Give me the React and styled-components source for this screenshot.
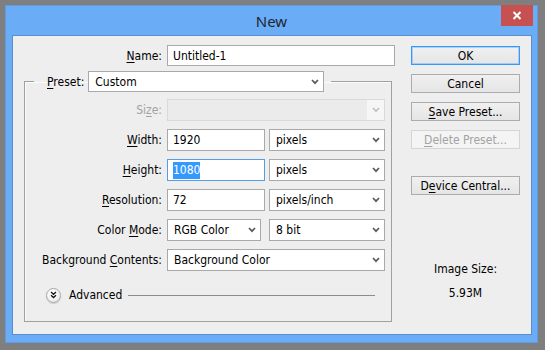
import React from "react";
import styled, { createGlobalStyle } from "styled-components";

const Global = createGlobalStyle`
  html, body { margin: 0; padding: 0; }
  body {
    background: #7f7f7f;
    font-family: "DejaVu Sans Condensed", "DejaVu Sans", sans-serif;
    font-size: 12px;
    color: #000;
  }
  * { box-sizing: border-box; }
`;

const Window = styled.div`
  width: 533px;
  height: 338px;
  margin: 5px;
  border: 1px solid #5d9be2;
  background: #6aacf6;
  display: flex;
  flex-direction: column;
`;

const TitleBar = styled.div`
  height: 29px;
  display: grid;
  grid-template-columns: 1fr auto 1fr;
`;

const Title = styled.div`
  grid-column: 2;
  align-self: center;
  font-family: "Noto Sans", "Open Sans", sans-serif;
  font-size: 15px;
  color: #1e2630;
  padding-top: 1px;
`;

const CloseButton = styled.div`
  grid-column: 3;
  justify-self: end;
  align-self: start;
  width: 32px;
  height: 21px;
  margin-top: -1px;
  margin-right: 4px;
  background: #c75050;
  display: flex;
  align-items: center;
  justify-content: center;
`;

const Client = styled.div`
  flex: 1;
  margin: 0 5px 7px 6px;
  border: 1px solid #5b8fcc;
  background: #eeeeee;
  display: flex;
`;

const Main = styled.div`
  width: 382px;
  padding-top: 9px;
  display: flex;
  flex-direction: column;
`;

const NameRow = styled.div`
  display: grid;
  grid-template-columns: 149px 228px;
  column-gap: 5px;
  height: 21px;
`;

const Label = styled.div`
  display: flex;
  align-items: center;
  justify-content: flex-end;
  white-space: nowrap;
  color: ${(p) => (p.$disabled ? "#a3a3a3" : "#000")};
  u { text-underline-offset: 2px; }
`;

const Group = styled.fieldset`
  margin: 5px 0 0 11px;
  width: 368px;
  padding: 0 6px 0 0;
  border: 1px solid #a0a0a0;
  box-shadow: inset 1px 1px 0 #fbfbfb;
  min-width: 0;
`;

const Legend = styled.legend`
  margin-left: 9px;
  padding: 0 7px 0 13px;
`;

const LegendInner = styled.div`
  display: flex;
  align-items: center;
  gap: 4px;
  height: 21px;
`;

const FormGrid = styled.div`
  margin-top: 7px;
  display: grid;
  grid-template-columns: 137px 218px;
  grid-auto-rows: 22px;
  column-gap: 5px;
  row-gap: 8px;
`;

const Pair = styled.div`
  display: flex;
  justify-content: space-between;
`;

const Field = styled.div`
  width: ${(p) => p.$width || "100%"};
  height: 100%;
  border: 1px solid ${(p) => (p.$focused ? "#569de5" : "#a9a9a9")};
  background: #fff;
  display: flex;
  align-items: center;
  padding-left: 5px;
  white-space: nowrap;
`;

const Selected = styled.span`
  background: #3399ff;
  color: #fff;
  padding: 1px 0 2px;
`;

const SelectBox = styled.div`
  width: ${(p) => p.$width || "100%"};
  height: 100%;
  border: 1px solid ${(p) => (p.$disabled ? "#d9d9d9" : "#a9a9a9")};
  background: ${(p) => (p.$disabled ? "#ebebeb" : "#fff")};
  display: flex;
  align-items: stretch;
`;

const SelectText = styled.div`
  flex: 1;
  display: flex;
  align-items: center;
  padding-left: 6px;
  white-space: nowrap;
`;

const ChevronCell = styled.div`
  width: 17px;
  display: flex;
  align-items: center;
  justify-content: center;
  background: ${(p) => (p.$disabled ? "#f6f6f6" : "transparent")};
`;

const AdvancedRow = styled.div`
  margin: 16px 10px 18px 21px;
  height: 16px;
  display: flex;
  align-items: center;
  gap: 8px;
`;

const RoundButton = styled.div`
  width: 15px;
  height: 15px;
  border-radius: 50%;
  border: 1px solid #a8a8a8;
  background: radial-gradient(circle at 40% 35%, #ffffff 0%, #f2f2f2 55%, #d6d6d6 100%);
  box-shadow: 0 1px 1px rgba(0, 0, 0, 0.15);
  display: flex;
  align-items: center;
  justify-content: center;
`;

const Rule = styled.div`
  flex: 1;
  height: 1px;
  margin-left: -2px;
  background: #8c8c8c;
`;

const Side = styled.div`
  width: 109px;
  margin-left: 16px;
  padding-top: 10px;
  display: flex;
  flex-direction: column;
  gap: 9px;
`;

const Button = styled.div`
  height: 19px;
  border: 1px solid ${(p) => (p.$default ? "#3399ff" : p.$disabled ? "#d5d5d5" : "#acacac")};
  background: ${(p) =>
    p.$disabled ? "#f4f4f4" : "linear-gradient(#f0f0f0, #e5e5e5)"};
  color: ${(p) => (p.$disabled ? "#a3a3a3" : "#000")};
  box-shadow: ${(p) => (p.$default ? "inset 0 0 0 1px rgba(51,153,255,0.35)" : "none")};
  display: flex;
  align-items: center;
  justify-content: center;
  white-space: nowrap;
  margin-top: ${(p) => p.$gapBefore || 0}px;
  u { text-underline-offset: 2px; }
`;

const ImageInfo = styled.div`
  margin-top: 58px;
  display: flex;
  flex-direction: column;
  align-items: center;
  gap: 9px;
  line-height: 15px;
`;

const Chevron = ({ color = "#5a5a5a" }) => (
  <svg width="8" height="6" viewBox="0 0 8 6">
    <polyline points="1,1 4,4.2 7,1" fill="none" stroke={color} strokeWidth="1.7" />
  </svg>
);

const Select = ({ children, width, disabled }) => (
  <SelectBox $width={width} $disabled={disabled}>
    <SelectText>{children}</SelectText>
    <ChevronCell $disabled={disabled}>
      <Chevron color={disabled ? "#c2c2c2" : "#5a5a5a"} />
    </ChevronCell>
  </SelectBox>
);

export default function App() {
  return (
    <>
      <Global />
      <Window>
        <TitleBar>
          <Title>New</Title>
          <CloseButton>
            <svg width="10" height="9" viewBox="0 0 10 9">
              <path d="M1.5 1 L8.5 8 M8.5 1 L1.5 8" stroke="#fff" strokeWidth="2" />
            </svg>
          </CloseButton>
        </TitleBar>
        <Client>
          <Main>
            <NameRow>
              <Label>
                <span><u>N</u>ame:</span>
              </Label>
              <Field>Untitled-1</Field>
            </NameRow>
            <Group>
              <Legend>
                <LegendInner>
                  <Label>
                    <span><u>P</u>reset:</span>
                  </Label>
                  <Select width="236px">Custom</Select>
                </LegendInner>
              </Legend>
              <FormGrid>
                <Label $disabled>
                  <span>Si<u>z</u>e:</span>
                </Label>
                <Select disabled />

                <Label>
                  <span><u>W</u>idth:</span>
                </Label>
                <Pair>
                  <Field $width="98px">1920</Field>
                  <Select width="116px">pixels</Select>
                </Pair>

                <Label>
                  <span><u>H</u>eight:</span>
                </Label>
                <Pair>
                  <Field $width="98px" $focused>
                    <Selected>1080</Selected>
                  </Field>
                  <Select width="116px">pixels</Select>
                </Pair>

                <Label>
                  <span><u>R</u>esolution:</span>
                </Label>
                <Pair>
                  <Field $width="98px">72</Field>
                  <Select width="116px">pixels/inch</Select>
                </Pair>

                <Label>
                  <span>Color <u>M</u>ode:</span>
                </Label>
                <Pair>
                  <Select width="94px">RGB Color</Select>
                  <Select width="116px">8 bit</Select>
                </Pair>

                <Label>
                  <span>Background <u>C</u>ontents:</span>
                </Label>
                <Select>Background Color</Select>
              </FormGrid>
              <AdvancedRow>
                <RoundButton>
                  <svg width="7" height="8" viewBox="0 0 7 8">
                    <polyline points="1,1 3.5,3.3 6,1" fill="none" stroke="#111" strokeWidth="1.3" />
                    <polyline points="1,4.3 3.5,6.6 6,4.3" fill="none" stroke="#111" strokeWidth="1.3" />
                  </svg>
                </RoundButton>
                <span>Advanced</span>
                <Rule />
              </AdvancedRow>
            </Group>
          </Main>
          <Side>
            <Button $default>OK</Button>
            <Button>Cancel</Button>
            <Button>
              <span><u>S</u>ave Preset...</span>
            </Button>
            <Button $disabled>
              <span><u>D</u>elete Preset...</span>
            </Button>
            <Button $gapBefore={18}>
              <span>D<u>e</u>vice Central...</span>
            </Button>
            <ImageInfo>
              <span>Image Size:</span>
              <span>5.93M</span>
            </ImageInfo>
          </Side>
        </Client>
      </Window>
    </>
  );
}
